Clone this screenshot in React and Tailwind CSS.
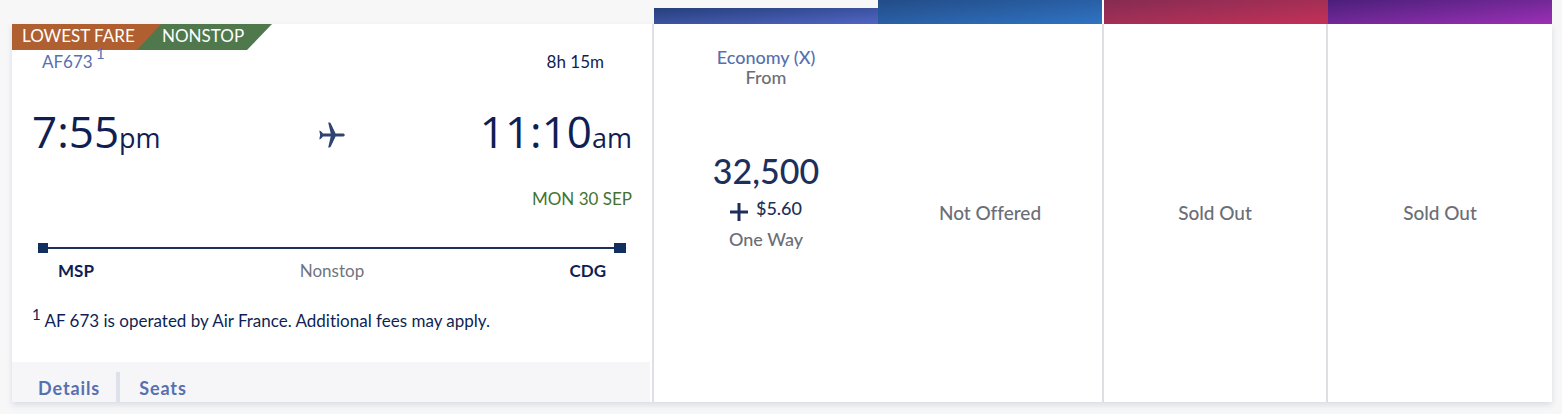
import React from 'react';

// Shared by the cabin colour strip and the card below it
const COLUMNS = 'grid grid-cols-[642fr_224fr_226fr_224fr_224fr]';

const FARES = [
    { id: 'first', status: 'Not Offered', divider: true },
    { id: 'premium', status: 'Sold Out', divider: true },
    { id: 'business', status: 'Sold Out', divider: false }
];

const PlaneIcon = () => (
    <svg viewBox="0 0 26 26" className="w-[26px] h-[26px]" fill="#2f4470" aria-hidden="true">
        <path d="M25.800 13c0-.9-.9-1.500-2.200-1.500h-7L11.800 1.500C11.500.9 11 .6 10.400.6H9.200l2.500 10.900H4L2 9.200.3 8.500 1.100 13 .3 17.500l1.700-.7 2-2.300h7.700L9.200 25.400h1.200c.6 0 1.100-.3 1.400-.9l4.800-10h7c1.300 0 2.200-.6 2.200-1.500z" />
    </svg>
);

const CabinStrip = () => (
    <div className={`${COLUMNS} h-6 items-end`}>
        <div />
        <div className="h-4 bg-linear-to-br from-[#263f7c] to-[#5165c4]" />
        <div className="h-6 border-r-2 border-white bg-linear-to-br from-[#234c87] to-[#2f74c4] bg-origin-border" />
        <div className="h-6 bg-linear-to-br from-[#852b52] to-[#c43058]" />
        <div className="h-6 bg-linear-to-br from-[#4b1f7a] to-[#9c2fb5]" />
    </div>
);

const FlightBadges = () => (
    <div className="flex h-[26px] text-[17px] leading-6 text-white">
        <span className="relative z-10 w-[149px] pl-[10px] bg-[#b05f30] whitespace-nowrap [clip-path:polygon(0_0,100%_0,125px_100%,0_100%)]">
            LOWEST FARE
        </span>
        <span className="-ml-6 w-[135px] pl-[25px] bg-[#4f794c] whitespace-nowrap [clip-path:polygon(0_0,100%_0,110px_100%,0_100%)]">
            NONSTOP
        </span>
    </div>
);

const FlightTime = ({ time, period }) => (
    <p className="font-['Open_Sans',sans-serif] text-[44px] leading-[58px] font-normal last:text-right">
        {time}
        <span className="text-[27px]">{period}</span>
    </p>
);

const FlightDetails = () => (
    <div className="flex flex-col border-r-2 border-[#dedfe8] text-[17px] text-[#0f1f54]">
        <FlightBadges />

        <div className="flex justify-between pl-[30px] pr-12 leading-6">
            <a href="#flight" className="relative z-20 text-[#5770b0]">
                AF673
                <sup className="absolute top-[-5px] left-[54px] text-[15px] leading-4">1</sup>
            </a>
            <span>8h 15m</span>
        </div>

        <div className="mt-7 grid grid-cols-[1fr_26px_1fr] items-center px-5">
            <FlightTime time="7:55" period="pm" />
            <PlaneIcon />
            <FlightTime time="11:10" period="am" />
        </div>

        <p className="mt-5 px-5 text-right leading-6 text-[#44732f]">MON 30 SEP</p>

        <div className="mt-8 mx-[26px] flex items-center">
            <span className="size-[10px] bg-[#12305f]" />
            <span className="h-[2px] flex-1 bg-[#1d2f5c]" />
            <span className="h-[10px] w-3 bg-[#12305f]" />
        </div>

        <div className="mt-1 grid grid-cols-3 px-[46px] leading-7">
            <span className="font-bold">MSP</span>
            <span className="text-center text-[#6f7480]">Nonstop</span>
            <span className="text-right font-bold">CDG</span>
        </div>

        <p className="mt-6 pl-5 leading-6">
            <sup className="text-[15px]">1</sup> AF 673 is operated by Air France. Additional fees may apply.
        </p>

        <div className="mt-auto mr-[2px] flex h-10 items-end bg-[#f6f6f8] text-lg leading-7 font-bold tracking-wider text-[#5770b0]">
            <a href="#details" className="pl-[26px] pr-4">Details</a>
            <span className="h-[30px] w-1 bg-[#dfe1ea]" />
            <a href="#seats" className="pl-[19px]">Seats</a>
        </div>
    </div>
);

const EconomyFare = () => (
    <div className="flex flex-col items-center pt-[23px] text-lg font-medium text-[#6b6e76]">
        <a href="#economy" className="leading-5 text-[#5770b0]">Economy (X)</a>
        <span className="leading-5">From</span>
        <span className="mt-[60px] text-[34px] leading-[48px] text-[#1d2f5a]">32,500</span>
        <span className="flex items-center gap-2 leading-6 text-[#1d2f5a]">
            <svg viewBox="0 0 18 18" className="mt-2 size-[18px]" stroke="#1d2f5a" strokeWidth="3" aria-hidden="true">
                <path d="M9 0v18M0 9h18" />
            </svg>
            $5.60
        </span>
        <span className="mt-[6px] leading-6">One Way</span>
    </div>
);

const UnavailableFare = ({ status, divider }) => (
    <div className={`flex items-center justify-center text-[19px] font-medium text-[#6b6e76] ${divider ? 'border-r-2 border-[#dedfe3]' : ''}`}>
        {status}
    </div>
);

export default function App() {
    return (
        <main className="min-h-screen bg-[#f7f7f8] pl-3 pr-[10px] pb-3 font-['Lato','Open_Sans',sans-serif] [font-variant-ligatures:none]">
            <CabinStrip />
            <section className={`${COLUMNS} min-h-[378px] bg-white shadow-[0_3px_6px_#d9dce3]`}>
                <FlightDetails />
                <EconomyFare />
                {FARES.map(fare => (
                    <UnavailableFare key={fare.id} status={fare.status} divider={fare.divider} />
                ))}
            </section>
        </main>
    );
}
